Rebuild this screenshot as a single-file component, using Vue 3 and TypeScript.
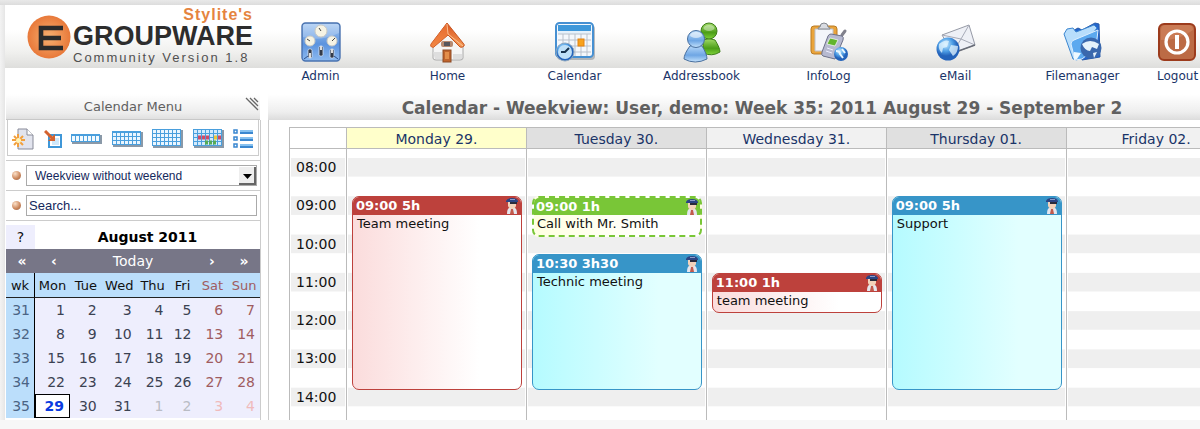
<script setup lang="ts">
interface CalEvent {
  time: string
  title: string
  start: number
  end: number
  tone: 'red' | 'green' | 'blue'
}
interface Day {
  name: string
  shade: string
  events: CalEvent[]
}

const FIRST_HOUR = 8
const hours = ['08:00', '09:00', '10:00', '11:00', '12:00', '13:00', '14:00']

const apps = ['Admin', 'Home', 'Calendar', 'Addressbook', 'InfoLog', 'eMail', 'Filemanager', 'Logout']

const days: Day[] = [
  { name: 'Monday 29.', shade: 'today', events: [{ time: '09:00 5h', title: 'Team meeting', start: 9, end: 14, tone: 'red' }] },
  {
    name: 'Tuesday 30.',
    shade: 'dark',
    events: [
      { time: '09:00 1h', title: 'Call with Mr. Smith', start: 9, end: 10, tone: 'green' },
      { time: '10:30 3h30', title: 'Technic meeting', start: 10.5, end: 14, tone: 'blue' },
    ],
  },
  { name: 'Wednesday 31.', shade: 'light', events: [{ time: '11:00 1h', title: 'team meeting', start: 11, end: 12, tone: 'red' }] },
  { name: 'Thursday 01.', shade: 'dark', events: [{ time: '09:00 5h', title: 'Support', start: 9, end: 14, tone: 'blue' }] },
  { name: 'Friday 02.', shade: 'light', events: [] },
]

const slot = (h: number) => (h - FIRST_HOUR) * 2 + 1

const weekdays = ['Mon', 'Tue', 'Wed', 'Thu', 'Fri', 'Sat', 'Sun']
const weeks = [
  { wk: 31, days: [1, 2, 3, 4, 5, 6, 7] },
  { wk: 32, days: [8, 9, 10, 11, 12, 13, 14] },
  { wk: 33, days: [15, 16, 17, 18, 19, 20, 21] },
  { wk: 34, days: [22, 23, 24, 25, 26, 27, 28] },
  { wk: 35, days: [29, 30, 31, 1, 2, 3, 4] },
]
const dayClass = (wk: number, d: number, i: number) => ({
  weekend: i > 4,
  other: wk === 35 && d < 10,
  current: wk === 35 && d === 29,
})
</script>

<template>
  <div class="frame">
    <div class="page">
      <header class="top">
        <a class="brand" href="#" aria-label="EGroupware">
          <svg class="brand-mark" viewBox="0 0 44 44" aria-hidden="true">
            <defs>
              <radialGradient id="orb"><stop offset="0" stop-color="#f8b070" /><stop offset="1" stop-color="#e8793a" /></radialGradient>
            </defs>
            <circle cx="22" cy="22" r="21.5" fill="url(#orb)" />
            <path d="M36 13H14v20h22M14 23h20" fill="none" stroke="#2b2b2b" stroke-width="4.600" />
          </svg>
          <span class="brand-text">
            <span class="brand-owner">Stylite's</span>
            <span class="brand-name">GROUPWARE</span>
            <span class="brand-version">Community Version 1.8</span>
          </span>
        </a>
        <nav class="apps">
          <a v-for="app in apps" :key="app" href="#" class="app" :class="{ last: app === 'Logout' }">
            <svg viewBox="0 0 40 40" aria-hidden="true">
              <defs>
                <linearGradient id="blue" x2="0" y2="1"><stop offset="0" stop-color="#a9cbf3" /><stop offset=".55" stop-color="#5c93de" /><stop offset="1" stop-color="#8dbaf0" /></linearGradient>
                <linearGradient id="green" x2="0" y2="1"><stop offset="0" stop-color="#a4dc6a" /><stop offset=".6" stop-color="#4c9e18" /><stop offset="1" stop-color="#7ed23a" /></linearGradient>
                <linearGradient id="person" x2="0" y2="1"><stop offset="0" stop-color="#bcdcfb" /><stop offset=".6" stop-color="#6ea6e4" /><stop offset="1" stop-color="#c4e2fc" /></linearGradient>
                <radialGradient id="globe" cx=".4" cy=".3"><stop offset="0" stop-color="#c8ecff" /><stop offset=".6" stop-color="#4f9fe6" /><stop offset="1" stop-color="#2463ba" /></radialGradient>
                <linearGradient id="roof" x2="0" y2="1"><stop offset="0" stop-color="#d9531e" /><stop offset="1" stop-color="#f59a55" /></linearGradient>
              </defs>
              <template v-if="app === 'Admin'">
                <rect x="1" y="1" width="38" height="38" rx="3.5" fill="url(#blue)" stroke="#4a73b0" stroke-width="1.4" />
                <path d="M2 15Q20 20 38 11V4q0-2-2-2H4q-2 0-2 2z" fill="#fff" opacity=".22" />
                <g fill="#f6f3e4" stroke="#c9c9c4"><circle cx="20" cy="9" r="6" /><circle cx="9" cy="19" r="5" /><circle cx="31" cy="19" r="5" /></g>
                <path d="M20 9l-2-3M9 19l-3-2M31 19l3-3" stroke="#444" />
                <g fill="#333a48" stroke="#d6e3f5" stroke-width=".8"><rect x="18" y="24" width="4" height="10" rx="1.5" /><rect x="7" y="27" width="4" height="9" rx="1.5" /><rect x="29" y="27" width="4" height="9" rx="1.5" /></g>
                <path d="M20 24v4M9 31v5M31 27v4" stroke="#ddd" stroke-width="2" />
                <path d="M3 37l4-3M37 37l-4-3" stroke="#2b4f8a" />
              </template>
              <template v-else-if="app === 'Home'">
                <path d="M5 20L19 8l16 14v14q0 2-3 2H8q-3 0-3-2z" fill="#f5f5f5" stroke="#aaa" />
                <path d="M25 32h9v5h-9zM5 30h9v7H7z" fill="#dedede" />
                <path d="M19 1L3 22q-1 3 1 3 2 1 3-1L20 13l12 12q2 1 4-1 1-1-1-3z" fill="url(#roof)" stroke="#c75724" />
                <path d="M19 1L3 22q-1 3 1 3 2 1 3-1L20 13z" fill="#ef7a3a" opacity=".6" />
                <path d="M19 2l1 10L35 24" stroke="#ffd0a4" fill="none" opacity=".8" />
                <rect x="15" y="28" width="8" height="12" fill="#c0642c" stroke="#8c4a25" />
                <path d="M17 30h4v7h-4z" fill="#e38e4b" />
                <rect x="13" y="19" width="12" height="6" rx="2" fill="#b58a72" /><path d="M16 20h6v4h-6z" fill="#56565d" />
              </template>
              <template v-else-if="app === 'Calendar'">
                <rect x="2" y="3" width="38" height="35" rx="4" fill="#8c9299" opacity=".6" />
                <rect x="1" y="1" width="37" height="34" rx="3.500" fill="#f5f8fc" stroke="#4690d2" stroke-width="2" />
                <path d="M3 3h33v6H3z" fill="#3f98da" /><path d="M3 9h33v3H3z" fill="#e5f1fb" />
                <path d="M3 12h33M3 18h33M3 24h33M3 30h33M8 12v22M14 12v22M20 12v22M26 12v22M32 12v22" stroke="#bac1cb" />
                <rect x="23" y="17" width="6" height="7" fill="#f8a21d" stroke="#e48210" />
                <circle cx="10" cy="30" r="9" fill="url(#globe)" stroke="#8da7c0" /><circle cx="10" cy="30" r="7" fill="#bfe0f8" />
                <path d="M14 26l-4 4H6" stroke="#17324d" stroke-width="2" fill="none" />
              </template>
              <template v-else-if="app === 'Addressbook'">
                <g fill="url(#green)" stroke="#3e7f1a"><path d="M21 18q6-3 12 0 5 8 5 12-8 5-17 1z" /><circle cx="27" cy="9" r="8" /></g>
                <ellipse cx="27" cy="6" rx="5.500" ry="3" fill="#fff" opacity=".4" />
                <g fill="url(#person)" stroke="#49709f"><path d="M8 24q6-2 12 0 5 8 5 13-12 6-23 0 0-5 6-13z" /><circle cx="14" cy="17" r="8.500" /></g>
                <ellipse cx="14" cy="13" rx="6" ry="3" fill="#fff" opacity=".55" />
              </template>
              <template v-else-if="app === 'InfoLog'">
                <rect x="2" y="4" width="26" height="28" rx="3" fill="#eaa43b" stroke="#b87b25" />
                <path d="M6 7h18v22H6z" fill="#f3f5fa" stroke="#bbbfc8" />
                <path d="M9 7q0-2 2-2 0-4 4-4t4 4q2 0 2 2z" fill="#d9dce2" stroke="#84888f" />
                <path d="M33 13l3-4" stroke="#81818c" stroke-width="3" stroke-linecap="round" />
                <path d="M22 12l11 2q2 1 1 4l-8 19-12-3q-2-1-1-4l6-16q1-2 3-2z" fill="#b7bad0" stroke="#6d7189" />
                <path d="M21 16l8 2-3 6-8-2z" fill="#62b52c" stroke="#fff" stroke-width=".7" />
                <path d="M18 26l6 2M17 29l6 2" stroke="#eef" />
                <circle cx="32" cy="32" r="7" fill="url(#globe)" /><path d="M27 29q4 0 4 3l3 4M33 27l3 4" stroke="#e9f7ff" stroke-width="2" fill="none" />
              </template>
              <template v-else-if="app === 'eMail'">
                <path d="M6 13L33 3l6 20-22 8z" fill="#eef0f6" stroke="#969aa6" />
                <path d="M6 13l19 4 8-14M39 23l-14-6-8 13" fill="none" stroke="#a7abb8" /><path d="M17 31l22-8" stroke="#686c77" stroke-width="1.500" />
                <circle cx="12" cy="27" r="11.500" fill="url(#globe)" />
                <path d="M3 22q6-5 10-3l-2 6-4 1-1 5q-4-3-3-9zM15 23l7 1q0 7-5 10l-4-6z" fill="#e4f5ff" opacity=".75" />
              </template>
              <template v-else-if="app === 'Filemanager'">
                <path d="M6 11l9-5 4 2 13-7 4 1 1 33-18 3z" fill="#2466ce" stroke="#2759a7" />
                <path d="M1 12l3-5 6-1 3 4 18-7 3 3-13 17-1 10-6 5-4-1z" fill="#b8defc" stroke="#3c86d0" />
                <path d="M12 38L8 22q0-3 3-4l24-10-2 18-14 11z" fill="#5ca9ef" stroke="#ddefff" />
                <path d="M11 30l7 1-4 6-3 1z" fill="#eef9ff" />
                <circle cx="28" cy="26" r="10.500" fill="#3a68ad" /><path d="M19 22q8-6 17 0l-2 5-5-2-2 4q-5 0-8-7zM30 31l4-1-3 6z" fill="#e6f3fc" />
              </template>
              <template v-else>
                <rect x="2" y="2" width="36" height="36" rx="5" fill="#bc6b45" stroke="#9c3b1c" stroke-width="2" />
                <path d="M4 8q0-5 5-5h22q5 0 5 5-12 10-32 10z" fill="#d88b66" opacity=".5" />
                <circle cx="20" cy="20" r="11" fill="none" stroke="#fff" stroke-width="3.200" />
                <path d="M20 13v14" stroke="#fff" stroke-width="4" />
              </template>
            </svg>
            <span>{{ app }}</span>
          </a>
        </nav>
      </header>

      <div class="columns">
        <aside class="side">
          <div class="side-head">
            <span>Calendar Menu</span>
            <svg class="grip" viewBox="0 0 14 14" aria-hidden="true"><path d="M1 1l12 12M5 1l8 8M9 1l4 4" stroke="#666" stroke-width="1.300" fill="none" /></svg>
          </div>
          <div class="tools">
            <button type="button" aria-label="Add">
              <svg width="22" height="22" viewBox="0 0 22 22"><path d="M6 1h9l6 6v14H6z" fill="#e2e4ee" stroke="#888b99" /><path d="M15 1v6h6" fill="#fff" stroke="#888b99" /><path d="M6 6v13M0 12h13M2 8l9 9M11 8l-9 9" stroke="#f2a03d" stroke-width="2" /><circle cx="6.500" cy="12.500" r="2.500" fill="#fff4b8" /></svg>
            </button>
            <button type="button" aria-label="Day view">
              <svg width="18" height="18" viewBox="0 0 18 18"><path d="M5 5h12v12H5z" fill="#fff" stroke="#3f97d8" stroke-width="2" /><path d="M8 8h7v7H8z" fill="#cfe8fa" /><path d="M1 1l8 8" stroke="#d4622f" stroke-width="3" /><path d="M11 4v7H4z" fill="#d4622f" /></svg>
            </button>
            <button type="button" aria-label="Four day view">
              <svg width="31" height="10" viewBox="0 0 31 10"><path d="M1 1h30v9H1z" fill="#8a99a8" /><path d="M0 0h29v8H0z" fill="#4a9fdd" /><path d="M1 4.500h27" stroke="#f2faff" stroke-width="5" stroke-dasharray="3 1" /></svg>
            </button>
            <button type="button" aria-label="Week view">
              <svg width="31" height="16" viewBox="0 0 31 16"><path d="M1 1h30v15H1z" fill="#8a99a8" /><path d="M0 0h29v14H0z" fill="#4a9fdd" /><path d="M1 3.500h27M1 7.500h27M1 11.500h27" stroke="#eaf6ff" stroke-width="3" stroke-dasharray="3 1" /></svg>
            </button>
            <button type="button" aria-label="Month view">
              <svg width="31" height="19" viewBox="0 0 31 19"><path d="M1 1h30v18H1z" fill="#8a99a8" /><path d="M0 0h29v17H0z" fill="#4a9fdd" /><path d="M1 2.500h27M1 6.500h27M1 10.500h27M1 14.500h27" stroke="#eaf6ff" stroke-width="3" stroke-dasharray="3 1" /></svg>
            </button>
            <button type="button" aria-label="Planner">
              <svg width="31" height="19" viewBox="0 0 31 19"><path d="M1 1h30v18H1z" fill="#8a99a8" /><path d="M0 0h29v17H0z" fill="#4a9fdd" /><path d="M1 2.500h27M1 6.500h27M1 10.500h27M1 14.500h27" stroke="#d3eafc" stroke-width="3" stroke-dasharray="3 1" /><path d="M5 8.500h11" stroke="#cf4a68" stroke-width="4" stroke-dasharray="3 1" /><path d="M21 8.500h3" stroke="#efc638" stroke-width="4" /><path d="M25 8.500h3" stroke="#cf4a68" stroke-width="4" /><path d="M12 13.500h12" stroke="#55aa55" stroke-width="4" stroke-dasharray="3 1" /></svg>
            </button>
            <button type="button" aria-label="List view">
              <svg width="21" height="20" viewBox="0 0 21 20"><g fill="#fff" stroke="#3a87d0" stroke-width="1.500"><rect x="1" y="1" width="3" height="3" /><rect x="1" y="8" width="3" height="3" /><rect x="1" y="15" width="3" height="3" /></g><path d="M7 3h13M7 10h13M7 17h13" stroke="#3a87d0" stroke-width="4" /><path d="M7 2h13M7 9h13M7 16h13" stroke="#86c1f0" stroke-width="2" /></svg>
            </button>
          </div>
          <div class="field">
            <i class="bullet" />
            <span class="picker">
              <select aria-label="View">
                <option>Weekview without weekend</option>
              </select>
              <svg class="drop" viewBox="0 0 17 18" aria-hidden="true"><path d="M0 0h17v18H0z" fill="#eee" /><path d="M0 17h16V0" fill="none" stroke="#666" stroke-width="2" /><path d="M4 7h9l-4.500 5z" fill="#000" /></svg>
            </span>
          </div>
          <div class="field">
            <i class="bullet" />
            <input type="text" aria-label="Search" value="Search..." />
          </div>

          <div class="month">
            <div class="month-title">
              <button type="button">?</button>
              <strong>August 2011</strong>
            </div>
            <div class="month-nav">
              <button type="button">«</button>
              <button type="button">‹</button>
              <button type="button" class="now">Today</button>
              <button type="button">›</button>
              <button type="button">»</button>
            </div>
            <table>
              <thead>
                <tr>
                  <th class="wk">wk</th>
                  <th v-for="(d, i) in weekdays" :key="d" :class="{ weekend: i > 4, wide: i === 0 || i === 2, narrow: i === 4 }">{{ d }}</th>
                </tr>
              </thead>
              <tbody>
                <tr v-for="w in weeks" :key="w.wk">
                  <td class="wk">{{ w.wk }}</td>
                  <td v-for="(d, i) in w.days" :key="i" :class="dayClass(w.wk, d, i)">{{ d }}</td>
                </tr>
              </tbody>
            </table>
          </div>
        </aside>

        <main class="main">
          <div class="title-bar">
            <h1>Calendar - Weekview: User, demo: Week 35: 2011 August 29 - September 2</h1>
          </div>
          <div class="stage">
            <div class="week">
              <section class="times">
                <div class="day-head" />
                <div class="slots">
                  <span v-for="h in hours" :key="h">{{ h }}</span>
                </div>
              </section>
              <section v-for="day in days" :key="day.name" class="day">
                <div class="day-head" :class="day.shade"><a href="#">{{ day.name }}</a></div>
                <div class="slots">
                  <article
                    v-for="ev in day.events"
                    :key="ev.title"
                    class="event"
                    :class="ev.tone"
                    :style="{ gridRow: `${slot(ev.start)} / ${slot(ev.end)}` }"
                  >
                    <div class="event-head">
                      <b>{{ ev.time }}</b>
                      <svg width="14" height="17" viewBox="0 0 14 17" aria-hidden="true">
                        <path d="M2 17q0-5 2-6h6q2 1 2 6z" fill="#e4e6ee" /><path d="M6 12h2l1 5H5z" fill="#c25a4c" />
                        <path d="M3 5h8v4q-1 3-4 3t-4-3z" fill="#f3d2ba" />
                        <path d="M1 4q1-3 6-3t6 3v1H1z" fill="#2b4484" /><path d="M5 2h5v1H5z" fill="#8d9cc8" /><path d="M5 5h7v2H5z" fill="#2a2b3c" />
                      </svg>
                    </div>
                    <p>{{ ev.title }}</p>
                  </article>
                </div>
              </section>
            </div>
          </div>
        </main>
      </div>
    </div>
  </div>
</template>

<style>
body {
  margin: 0;
  background: #f7f7f7;
}
</style>

<style scoped>
* {
  box-sizing: border-box;
}
.frame {
  height: 100vh;
  padding: 5px 0 9px 5px;
  overflow: hidden;
  background: linear-gradient(#e9e9e9, #dcdcdc) top / 100% 5px no-repeat, linear-gradient(90deg, #f3f3f3, #e6e6e6) left top / 5px calc(100% - 9px) no-repeat, #f7f7f7;
  font-family: "DejaVu Sans", Verdana, sans-serif;
  font-size: 13px;
  color: #111;
}
.page {
  display: flex;
  flex-direction: column;
  height: 100%;
  background: #fff;
  overflow: hidden;
}
a {
  color: #1a3468;
  text-decoration: none;
}
button {
  border: 0;
  padding: 0;
  background: none;
  font: inherit;
  color: inherit;
}

.top {
  display: flex;
  flex: none;
  height: 83px;
  background: linear-gradient(#fff 40%, #f0f0ee 75%, #dededc) top / 100% 63px no-repeat;
}
.brand {
  display: flex;
  flex: none;
  width: 252px;
  padding: 2px 0 0 22px;
}
.brand-mark {
  width: 44px;
  height: 44px;
  margin-top: 8px;
}
.brand-text {
  display: flex;
  flex-direction: column;
  width: 180px;
  margin-left: 2px;
  font-family: "Liberation Sans", Arial, sans-serif;
  white-space: nowrap;
}
.brand-owner {
  align-self: flex-end;
  font-size: 16px;
  line-height: 16px;
  font-weight: bold;
  letter-spacing: 1px;
  color: #e5843f;
}
.brand-name {
  font-size: 27px;
  line-height: 26px;
  font-weight: bold;
  color: #2d2d2d;
}
.brand-version {
  margin-top: 2px;
  font-size: 13px;
  line-height: 14px;
  letter-spacing: 2px;
  color: #505050;
}
.apps {
  display: flex;
  flex: 1;
  min-width: 0;
  padding-top: 17px;
}
.app {
  display: flex;
  flex: 1;
  flex-direction: column;
  align-items: center;
  gap: 6px;
  font-size: 12px;
  line-height: 16px;
}
.app svg {
  width: 40px;
  height: 40px;
  overflow: visible;
}
.app.last {
  flex: 0 0 54px;
  padding-left: 11px;
  align-items: flex-start;
}

.columns {
  display: flex;
  flex: 1;
  min-height: 0;
}
.side {
  flex: none;
  width: 256px;
  padding: 0 1px;
  background: linear-gradient(#ccc, #ccc) right 0 top 32px / 1px 100% no-repeat;
}
.side-head {
  display: flex;
  align-items: center;
  justify-content: center;
  position: relative;
  height: 32px;
  padding-top: 6px;
  background: linear-gradient(#fff 20%, #ededed 80%, #e0e0e0);
  border-bottom: 1px solid #c8c8c8;
  color: #606060;
}
.grip {
  position: absolute;
  top: 9px;
  right: 1px;
  width: 14px;
  height: 14px;
}
.tools {
  display: flex;
  align-items: center;
  justify-content: space-between;
  height: 36px;
  margin: 0 1px 4px;
  padding: 2px 4px 0;
  border: 1px solid #ccc;
  border-top: 0;
}
.tools button {
  display: flex;
}
.field {
  display: flex;
  align-items: center;
  gap: 5px;
  height: 30px;
  padding: 0 3px 0 6px;
  border-top: 1px solid #ccc;
  font-family: "Liberation Sans", Arial, sans-serif;
}
.bullet {
  flex: none;
  width: 9px;
  height: 9px;
  border-radius: 50%;
  background: radial-gradient(circle at 35% 30%, #fbe0c8, #c98256 60%, #8a6a58);
}
.picker {
  display: flex;
  flex: 1;
  position: relative;
}
.field select,
.field input {
  flex: 1;
  min-width: 0;
  height: 21px;
  padding: 0 2px;
  border: 1px solid #aaa;
  border-radius: 0;
  background: #fff;
  font: 13px "Liberation Sans", Arial, sans-serif;
  color: #14285c;
}
.field select {
  appearance: none;
  padding: 0 8px;
  font-size: 12px;
}
.drop {
  position: absolute;
  top: 2px;
  right: 1px;
  width: 17px;
  height: 18px;
  pointer-events: none;
}

.month {
  border-top: 1px solid #ccc;
  padding-top: 4px;
  font-size: 14px;
}
.month-title {
  display: flex;
  height: 24px;
  line-height: 24px;
}
.month-title button {
  width: 29px;
  background: #eeeefd;
}
.month-title strong {
  flex: 1;
  text-align: center;
  color: #000;
}
.month-nav {
  display: flex;
  height: 24px;
  background: #777687;
  color: #fff;
  font-weight: bold;
}
.month-nav button {
  width: 32px;
}
.month-nav .now {
  flex: 1;
  font-weight: normal;
}
table {
  width: 100%;
  table-layout: fixed;
  border-collapse: separate;
  border-spacing: 0;
}
th {
  height: 25px;
  padding: 0;
  font-size: 13px;
  font-weight: normal;
  background: #bbdefb;
  border-bottom: 1px solid #222;
}
th.wk {
  width: 29px;
}
th.wide {
  width: 35px;
}
th.narrow {
  width: 28px;
}
td {
  height: 24px;
  padding: 0 5px 0 0;
  text-align: right;
  background: #eeeefd;
  color: #3b4252;
}
.wk {
  background: #bbdefb;
  border-right: 1px solid #000;
}
td.wk {
  padding-right: 4px;
  color: #4b6484;
}
.weekend {
  color: #a05c60;
}
.other {
  color: #b9bcc4;
}
.other.weekend {
  color: #f0babb;
}
td.current {
  border: 1px solid #000;
  background: #fff;
  font-weight: bold;
  color: #0a3be0;
}

.main {
  display: flex;
  flex: 1;
  flex-direction: column;
  min-width: 0;
  margin-left: 7px;
}
.title-bar {
  flex: none;
  height: 32px;
  background: linear-gradient(#fff 20%, #eee 75%, #dcdcdc);
}
h1 {
  width: 106%;
  margin: 0;
  padding-top: 6px;
  text-align: center;
  white-space: nowrap;
  font-size: 17px;
  line-height: 28px;
  color: #606060;
}
.stage {
  display: flex;
  flex: 1;
  min-height: 0;
  padding: 7px 0 0 20px;
  border-left: 1px solid #ccc;
}
.week {
  display: flex;
  flex: none;
  width: 105%;
  align-self: flex-start;
}
.times {
  flex: none;
  width: 57px;
  border-left: 1px solid #bbb;
}
.day {
  flex: 1;
  min-width: 0;
  border-left: 1px solid #bbb;
}
.day-head {
  height: 22px;
  line-height: 22px;
  border-top: 1px solid #bbb;
  border-bottom: 1px solid #bbb;
  text-align: center;
  font-size: 14px;
}
.day-head.today {
  background: #ffffcb;
}
.day-head.dark {
  background: #e0e0e0;
}
.day-head.light {
  background: #f1f1f1;
}
.slots {
  display: grid;
  grid-template-rows: repeat(14, minmax(0, 1fr));
  height: 277px;
  padding: 9px 1px 0;
  background: linear-gradient(#efefef 50%, #fff 50%) content-box 0 0 / 100% calc(100% / 7);
}
.times .slots {
  grid-template-rows: repeat(7, 1fr);
  font-size: 14px;
  line-height: 19px;
}
.times .slots span {
  padding-left: 5px;
}
.event {
  display: flex;
  flex-direction: column;
  grid-column: 1;
  margin: 0 3px -2px 4px;
  border: 1px solid;
  border-radius: 7px;
  overflow: hidden;
  color: #111;
}
.event-head {
  display: flex;
  justify-content: space-between;
  flex: none;
  height: 18px;
  padding: 0 2px 0 3px;
  line-height: 18px;
  color: #fff;
}
.event p {
  margin: 0;
  padding-left: 4px;
  line-height: 18px;
}
.red {
  border-color: #bd413c;
  background: linear-gradient(90deg, #fbdcdc, #fff 75%);
}
.red .event-head {
  background: #bd413c;
}
.green {
  border: 2px dashed #79c637;
  background: linear-gradient(90deg, #ffffe2, #fff 75%);
}
.green .event-head {
  height: 17px;
  line-height: 17px;
  padding: 0 1px 0 2px;
  background: #79c637;
}
.green p {
  padding-left: 3px;
}
.blue {
  border-color: #3795c8;
  background: linear-gradient(90deg, #b5fbff, #e2ffff 75%);
}
.blue .event-head {
  background: #3795c8;
}
</style>
